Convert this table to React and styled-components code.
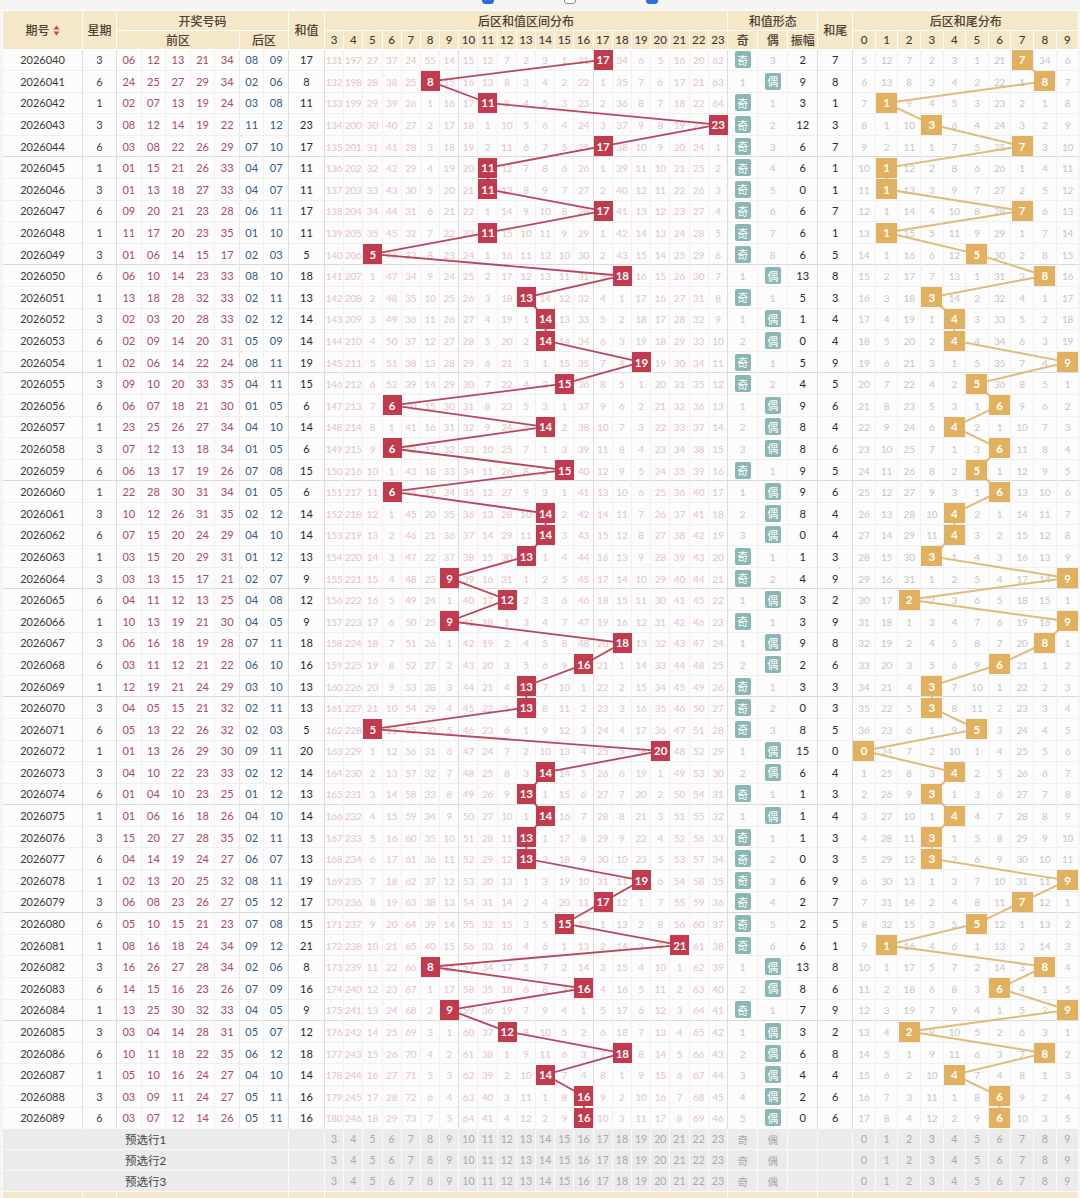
import React, { useLayoutEffect, useRef, useState } from "react";
import styled, { createGlobalStyle } from "styled-components";

const DRAWS = [
  ["2026040", "06 12 13 21 34", "08 09"],
  ["2026041", "24 25 27 29 34", "02 06"],
  ["2026042", "02 07 13 19 24", "03 08"],
  ["2026043", "08 12 14 19 22", "11 12"],
  ["2026044", "03 08 22 26 29", "07 10"],
  ["2026045", "01 15 21 26 33", "04 07"],
  ["2026046", "01 13 18 27 33", "04 07"],
  ["2026047", "09 20 21 23 28", "06 11"],
  ["2026048", "11 17 20 23 35", "01 10"],
  ["2026049", "01 06 14 15 17", "02 03"],
  ["2026050", "06 10 14 23 33", "08 10"],
  ["2026051", "13 18 28 32 33", "02 11"],
  ["2026052", "02 03 20 28 33", "02 12"],
  ["2026053", "02 09 14 20 31", "05 09"],
  ["2026054", "02 06 14 22 24", "08 11"],
  ["2026055", "09 10 20 33 35", "04 11"],
  ["2026056", "06 07 18 21 30", "01 05"],
  ["2026057", "23 25 26 27 34", "04 10"],
  ["2026058", "07 12 13 18 34", "01 05"],
  ["2026059", "06 13 17 19 26", "07 08"],
  ["2026060", "22 28 30 31 34", "01 05"],
  ["2026061", "10 12 26 31 35", "02 12"],
  ["2026062", "07 15 20 24 29", "04 10"],
  ["2026063", "03 15 20 29 31", "01 12"],
  ["2026064", "03 13 15 17 21", "02 07"],
  ["2026065", "04 11 12 13 25", "04 08"],
  ["2026066", "10 13 19 21 30", "04 05"],
  ["2026067", "06 16 18 19 28", "07 11"],
  ["2026068", "03 11 12 21 22", "06 10"],
  ["2026069", "12 19 21 24 29", "03 10"],
  ["2026070", "04 05 15 21 32", "02 11"],
  ["2026071", "05 13 22 26 32", "02 03"],
  ["2026072", "01 13 26 29 30", "09 11"],
  ["2026073", "04 10 22 23 33", "02 12"],
  ["2026074", "01 04 10 23 25", "01 12"],
  ["2026075", "01 06 16 18 26", "04 10"],
  ["2026076", "15 20 27 28 35", "02 11"],
  ["2026077", "04 14 19 24 27", "06 07"],
  ["2026078", "02 13 20 25 32", "08 11"],
  ["2026079", "06 08 23 26 27", "05 12"],
  ["2026080", "05 10 15 21 23", "07 08"],
  ["2026081", "08 16 18 24 34", "09 12"],
  ["2026082", "16 26 27 28 34", "02 06"],
  ["2026083", "14 15 16 23 26", "07 09"],
  ["2026084", "13 25 30 32 33", "04 05"],
  ["2026085", "03 04 14 28 31", "05 07"],
  ["2026086", "10 11 18 22 35", "06 12"],
  ["2026087", "05 10 16 24 27", "04 10"],
  ["2026088", "03 09 11 24 27", "05 11"],
  ["2026089", "03 07 12 14 26", "05 11"],
];

// misses shown on the first row (0 = hit)
const FIRST_SUM = [131, 197, 27, 37, 24, 55, 14, 15, 12, 7, 2, 3, 1, 21, 0, 34, 6, 5, 16, 20, 62];
const FIRST_TAIL = [5, 12, 7, 2, 3, 1, 21, 0, 34, 6];
const SUM_COLS = Array.from({ length: 21 }, (_, i) => i + 3);
const TAIL_COLS = Array.from({ length: 10 }, (_, i) => i);
const WEEK = [3, 6, 1];

function buildRows() {
  let sumMiss = FIRST_SUM.map((v) => v - 1);
  let tailMiss = FIRST_TAIL.map((v) => v - 1);
  let oddMiss = 0;
  let evenMiss = 2;
  let prevSum = 15;
  return DRAWS.map(([issue, front, back], i) => {
    const backNums = back.split(" ");
    const sum = Number(backNums[0]) + Number(backNums[1]);
    const tail = sum % 10;
    const odd = sum % 2 === 1;
    sumMiss = sumMiss.map((m, k) => (k + 3 === sum ? 0 : m + 1));
    tailMiss = tailMiss.map((m, k) => (k === tail ? 0 : m + 1));
    oddMiss = odd ? 0 : oddMiss + 1;
    evenMiss = odd ? evenMiss + 1 : 0;
    const row = {
      issue,
      week: WEEK[i % 3],
      front: front.split(" "),
      back: backNums,
      sum,
      tail,
      odd,
      oddMiss,
      evenMiss,
      swing: Math.abs(sum - prevSum),
      sumMiss,
      tailMiss,
    };
    prevSum = sum;
    return row;
  });
}

const ROWS = buildRows();

const WIDTHS = [
  80, 34,
  24.6, 24.6, 24.6, 24.6, 24.6, 24.5, 24.5,
  36,
  ...SUM_COLS.map(() => 19.19),
  30, 30, 30,
  35,
  ...TAIL_COLS.map(() => 22.6),
];

const GlobalStyle = createGlobalStyle`
  html, body {
    margin: 0;
    padding: 0;
    overflow: hidden;
    background: #f5f5f5;
  }
  body {
    font-family: Lato, "Noto Sans CJK SC", sans-serif;
    color: #333;
  }
`;

const TopBar = styled.div`
  height: 10px;
  overflow: hidden;
`;

const Controls = styled.div`
  display: flex;
  gap: 70px;
  margin: -9px 0 0 482px;
`;

const Checkbox = styled.span`
  display: block;
  width: 12px;
  height: 13px;
  border-radius: 3px;
  box-sizing: border-box;
  background: ${(p) => (p.$checked ? "#2e6fd9" : "#fff")};
  border: 1px solid ${(p) => (p.$checked ? "#2e6fd9" : "#8a8a8a")};
`;

const Chart = styled.div`
  position: relative;
  margin-left: 2px;
  width: 1076px;
  background: #fcfcfc;
`;

const Lines = styled.svg`
  position: absolute;
  left: 0;
  top: 0;
  width: 100%;
  height: 100%;
  pointer-events: none;
  overflow: visible;
`;

const Table = styled.table`
  width: 1076px;
  table-layout: fixed;
  border-collapse: collapse;
  text-align: center;
`;

const HeadRow = styled.tr`
  height: ${(p) => p.$h}px;
`;

const Th = styled.th`
  background: #f4e8c9;
  border: 1px solid #fff;
  padding: 0;
  font-size: ${(p) => (p.$num ? "11.5px" : "12px")};
  font-weight: 500;
  color: ${(p) => (p.$num ? "#3a3a3a" : "#4d4034")};
  white-space: nowrap;
  border-left: 1px solid ${(p) => (p.$sep ? "#e3d6b4" : "#fff")};
`;

const SortIcon = styled.svg`
  margin-left: 3px;
  vertical-align: -1px;
`;

const Row = styled.tr`
  height: 21.6px;
  border-top: 1px solid ${(p) => (p.$group ? "#d9d9d9" : "#efefef")};
`;

const Td = styled.td`
  padding: 0;
  font-size: 11px;
  white-space: nowrap;
  overflow: visible;
  border-left: 1px solid
    ${(p) => (p.$sep === "strong" ? "#dddddd" : p.$sep === "soft" ? "#e8e8e8" : "#f1f1f1")};
  color: ${(p) => p.$color || "#333"};
`;

const Miss = styled.span`
  font-size: 10px;
  letter-spacing: -0.2px;
  color: ${(p) => (p.$pink ? "#e7c2c8" : "#c6c6c6")};
`;

const Hit = styled.span`
  position: relative;
  z-index: 1;
  display: flex;
  align-items: center;
  justify-content: center;
  margin: 0 auto;
  width: ${(p) => (p.$tail ? 21 : 19)}px;
  height: 20px;
  background: ${(p) => (p.$tail ? "#e2b160" : "#c23a4d")};
  color: #fff;
  font-size: 11.5px;
  font-weight: 700;
`;

const Badge = styled.span`
  display: inline-flex;
  align-items: center;
  justify-content: center;
  width: 16px;
  height: 17px;
  border-radius: 2px;
  background: #88b7b4;
  color: #fff;
  font-size: 11px;
  vertical-align: middle;
`;

const FootRow = styled.tr`
  height: 21px;
`;

const FootCell = styled.td`
  padding: 0;
  background: #ebebeb;
  border: 1px solid #fafafa;
  font-size: ${(p) => (p.$label ? "11.5px" : "10.5px")};
  color: ${(p) => (p.$label ? "#444" : "#a9a9a9")};
  white-space: nowrap;
`;

const EndCell = styled.td`
  background: #f4e8c9;
  border: 1px solid #fff;
  height: 19px;
  padding: 0;
`;

function sepFor(idx) {
  if ([1, 2, 9, 10, 17, 24, 31, 34, 35].includes(idx)) return "strong";
  if (idx === 7) return "soft";
  return undefined;
}

function DataRow({ row, index }) {
  const cells = [];
  let idx = 0;
  const push = (content, color, key) => {
    cells.push(
      <Td key={key} $sep={sepFor(idx)} $color={color}>
        {content}
      </Td>
    );
    idx += 1;
  };
  push(row.issue, "#3a3a3a", "issue");
  push(row.week, "#444", "week");
  row.front.forEach((n, k) => push(n, "#ad4a5d", `f${k}`));
  row.back.forEach((n, k) => push(n, "#2f5b84", `b${k}`));
  push(row.sum, "#2a2a2a", "sum");
  SUM_COLS.forEach((v, k) =>
    push(
      v === row.sum ? <Hit data-hit="sum">{v}</Hit> : <Miss $pink>{row.sumMiss[k]}</Miss>,
      undefined,
      `s${v}`
    )
  );
  push(row.odd ? <Badge>奇</Badge> : <Miss>{row.oddMiss}</Miss>, undefined, "odd");
  push(!row.odd ? <Badge>偶</Badge> : <Miss>{row.evenMiss}</Miss>, undefined, "even");
  push(row.swing, "#2a2a2a", "swing");
  push(row.tail, "#2a2a2a", "tail");
  TAIL_COLS.forEach((v) =>
    push(
      v === row.tail ? (
        <Hit $tail data-hit="tail">
          {v}
        </Hit>
      ) : (
        <Miss>{row.tailMiss[v]}</Miss>
      ),
      undefined,
      `t${v}`
    )
  );
  return <Row $group={index > 0 && index % 5 === 0}>{cells}</Row>;
}

function FooterRow({ n }) {
  return (
    <FootRow>
      <FootCell $label colSpan={9}>
        预选行{n}
      </FootCell>
      <FootCell />
      {SUM_COLS.map((v) => (
        <FootCell key={v}>{v}</FootCell>
      ))}
      <FootCell>奇</FootCell>
      <FootCell>偶</FootCell>
      <FootCell />
      <FootCell />
      {TAIL_COLS.map((v) => (
        <FootCell key={v}>{v}</FootCell>
      ))}
    </FootRow>
  );
}

export default function App() {
  const chartRef = useRef(null);
  const [lines, setLines] = useState({ sum: "", tail: "" });

  useLayoutEffect(() => {
    const chart = chartRef.current;
    const base = chart.getBoundingClientRect();
    const points = (kind) =>
      Array.from(chart.querySelectorAll(`[data-hit="${kind}"]`))
        .map((el) => {
          const r = el.getBoundingClientRect();
          return `${r.left - base.left + r.width / 2},${r.top - base.top + r.height / 2}`;
        })
        .join(" ");
    setLines({ sum: points("sum"), tail: points("tail") });
  }, []);

  return (
    <>
      <GlobalStyle />
      <TopBar>
        <Controls>
          <Checkbox $checked />
          <Checkbox />
          <Checkbox $checked />
        </Controls>
      </TopBar>
      <Chart ref={chartRef}>
        <Lines>
          <polyline points={lines.sum} fill="none" stroke="#b9475a" strokeWidth="1.8" />
          <polyline points={lines.tail} fill="none" stroke="#dfbb7c" strokeWidth="2" />
        </Lines>
        <Table>
          <colgroup>
            {WIDTHS.map((w, i) => (
              <col key={i} style={{ width: w }} />
            ))}
          </colgroup>
          <thead>
            <HeadRow $h={19.5}>
              <Th rowSpan={2}>
                期号
                <SortIcon width="7" height="11" viewBox="0 0 7 11">
                  <path d="M3.5 0.5 L6.5 4.5 L0.5 4.5 Z" fill="#d3414f" />
                  <path d="M3.5 10.5 L6.5 6.5 L0.5 6.5 Z" fill="#d3414f" />
                </SortIcon>
              </Th>
              <Th rowSpan={2}>星期</Th>
              <Th colSpan={7}>开奖号码</Th>
              <Th rowSpan={2}>和值</Th>
              <Th colSpan={21}>后区和值区间分布</Th>
              <Th colSpan={3}>和值形态</Th>
              <Th rowSpan={2}>和尾</Th>
              <Th colSpan={10}>后区和尾分布</Th>
            </HeadRow>
            <HeadRow $h={19}>
              <Th colSpan={5}>前区</Th>
              <Th colSpan={2}>后区</Th>
              {SUM_COLS.map((v) => (
                <Th key={v} $num $sep={v === 10 || v === 17}>
                  {v}
                </Th>
              ))}
              <Th>奇</Th>
              <Th>偶</Th>
              <Th>振幅</Th>
              {TAIL_COLS.map((v) => (
                <Th key={v} $num>
                  {v}
                </Th>
              ))}
            </HeadRow>
          </thead>
          <tbody>
            {ROWS.map((row, i) => (
              <DataRow key={row.issue} row={row} index={i} />
            ))}
          </tbody>
          <tfoot>
            <FooterRow n={1} />
            <FooterRow n={2} />
            <FooterRow n={3} />
            <tr>
              <EndCell />
              <EndCell />
              <EndCell colSpan={7} />
              <EndCell />
              <EndCell colSpan={21} />
              <EndCell colSpan={3} />
              <EndCell />
              <EndCell colSpan={10} />
            </tr>
          </tfoot>
        </Table>
      </Chart>
    </>
  );
}
